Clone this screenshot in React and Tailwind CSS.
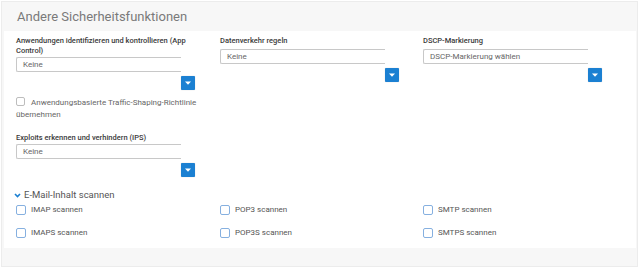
import React from "react";

const font = { fontFamily: "Roboto, 'Liberation Sans', sans-serif" };

function SelectBox({ value }) {
  return (
    <div>
      <div className="h-[15px] w-[165px] border border-r-0 border-[#c8c8c8] rounded-l-[2px] pl-[6px] flex items-center text-[8px] text-[#666] bg-white">
        {value}
      </div>
      <div className="w-[165px] flex justify-end mt-[4px]">
        <div className="w-[14px] h-[14px] -mr-[14px] bg-[#1b80d2] rounded-[1px] flex items-center justify-center shadow-[0_0_1px_rgba(0,0,0,0.3)]">
          <svg width="6" height="4" viewBox="0 0 6 4">
            <path d="M0 0.5 H6 L3 3.8 Z" fill="white" />
          </svg>
        </div>
      </div>
    </div>
  );
}

function Label({ children, className = "" }) {
  return (
    <div className={"text-[7.5px] leading-[10px] font-medium text-[#3a3a3a] " + className}>{children}</div>
  );
}

function Check({ label }) {
  return (
    <div className="flex items-center h-[11px]">
      <span className="w-[10px] h-[10px] rounded-[2px] border-[1.5px] border-[#86b0e0] bg-white" />
      <span className="ml-[5px] text-[8px] text-[#555]">{label}</span>
    </div>
  );
}

export default function App() {
  return (
    <div className="w-[640px] h-[269px] bg-white pt-[1px] pl-[1px]" style={font}>
      <div className="w-[637px] h-[266px] bg-[#f7f7f7] border border-[#ececec] flex flex-col">
        <div className="h-[29px] flex items-center pl-[15px] text-[13px] text-[#7a7a7a]">
          Andere Sicherheitsfunktionen
        </div>
        <div className="ml-[2px] mr-[1px] bg-white pl-[12px] pt-[5px] pb-[10px]">
          <div className="grid grid-cols-[204px_203px_1fr]">
            <div>
              <Label className="w-[172px]">Anwendungen identifizieren und kontrollieren (App Control)</Label>
              <div className="mt-[1px]">
                <SelectBox value="Keine" />
              </div>
              <div className="mt-[7px] text-[8px] leading-[12px] text-[#666] w-[190px]">
                <span className="inline-block align-[-1px] w-[9px] h-[9px] rounded-[2px] border border-[#bdbdbd] mr-[6px]" />
                Anwendungsbasierte Traffic-Shaping-Richtlinie übernehmen
              </div>
              <Label className="mt-[12px]">Exploits erkennen und verhindern (IPS)</Label>
              <div className="mt-[1px]">
                <SelectBox value="Keine" />
              </div>
            </div>
            <div>
              <Label>Datenverkehr regeln</Label>
              <div className="mt-[3px]">
                <SelectBox value="Keine" />
              </div>
            </div>
            <div>
              <Label>DSCP-Markierung</Label>
              <div className="mt-[3px]">
                <SelectBox value="DSCP-Markierung wählen" />
              </div>
            </div>
          </div>
          <div className="mt-[12px] flex items-center h-[12px] text-[9.5px] text-[#555]">
            <svg width="7" height="5" viewBox="0 0 7 5" className="mr-[3px] -ml-[2px]">
              <path d="M1 1 L3.5 3.6 L6 1" stroke="#1b80d2" strokeWidth="1.6" fill="none" />
            </svg>
            E-Mail-Inhalt scannen
          </div>
          <div className="grid grid-cols-[204px_203px_1fr] gap-y-[12px] mt-[3px]">
            <Check label="IMAP scannen" />
            <Check label="POP3 scannen" />
            <Check label="SMTP scannen" />
            <Check label="IMAPS scannen" />
            <Check label="POP3S scannen" />
            <Check label="SMTPS scannen" />
          </div>
        </div>
      </div>
    </div>
  );
}
